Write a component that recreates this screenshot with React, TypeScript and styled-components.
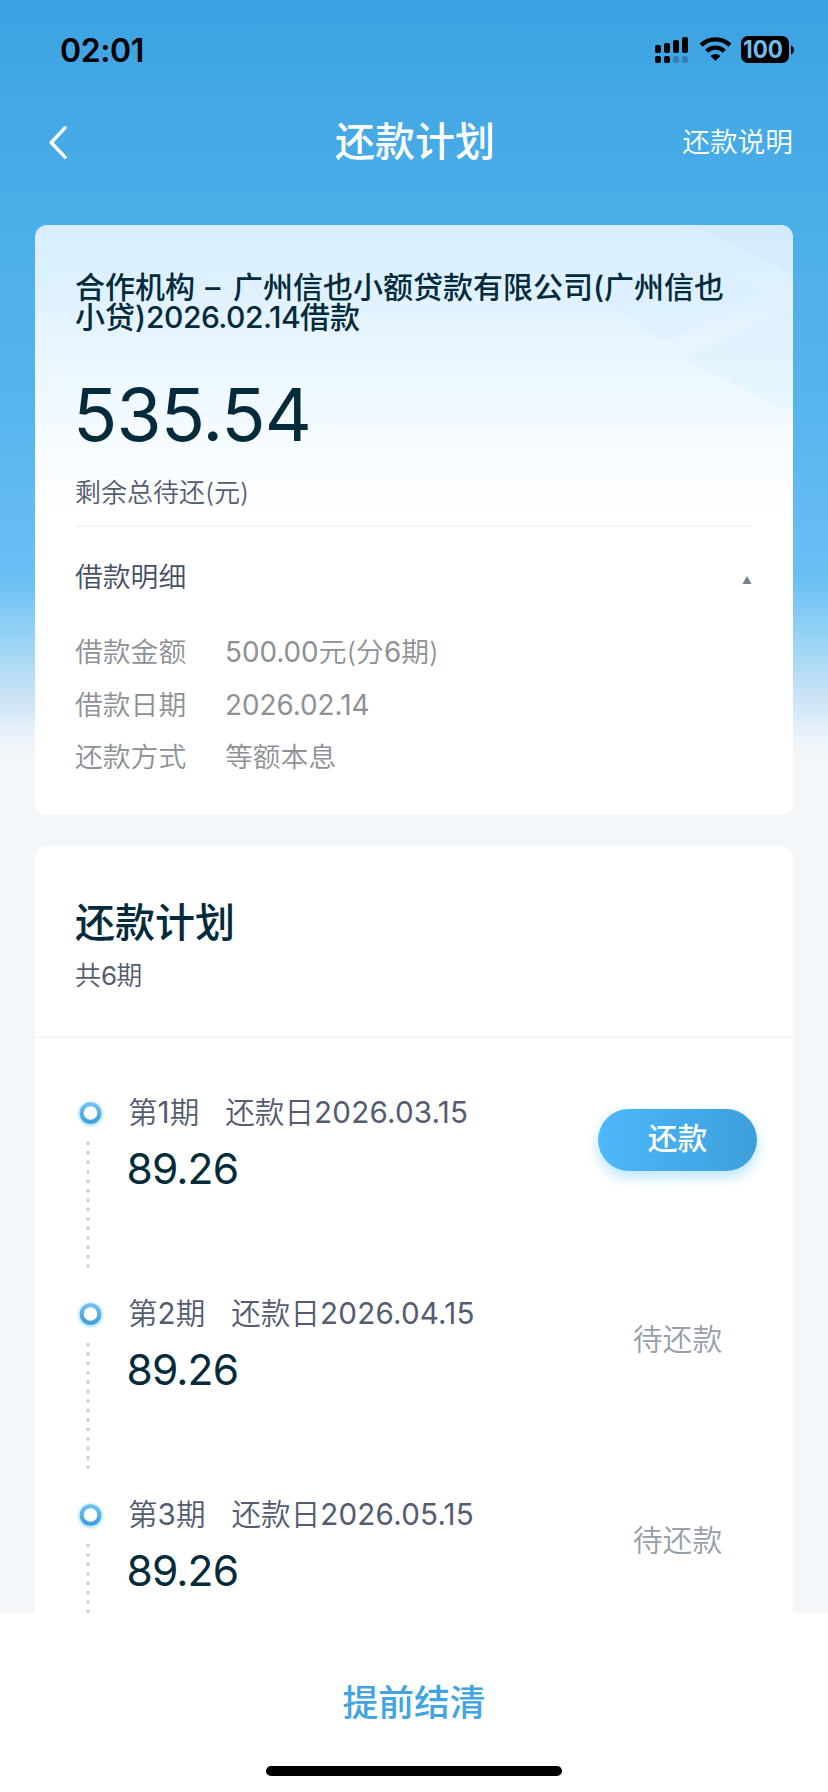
import React from 'react';
import styled, { createGlobalStyle } from 'styled-components';

const GlobalStyle = createGlobalStyle`
  * { box-sizing: border-box; }
  body {
    margin: 0;
    font-family: Inter, "Noto Sans CJK SC", sans-serif;
    background: #f4f7fa;
  }
`;

const Screen = styled.main`
  display: flex;
  flex-direction: column;
  width: 828px;
  height: 1792px;
  overflow: hidden;
  background: linear-gradient(
      180deg,
      #3ca2e1 0,
      #4baee9 220px,
      #57b4ed 400px,
      #66bcf3 530px,
      #68bff4 576px,
      #9ad3f5 640px,
      #cbe3f6 698px,
      #ecf3f9 738px,
      #f4f7fa 760px
    )
    #f4f7fa;
`;

const StatusBar = styled.div`
  display: flex;
  align-items: center;
  justify-content: space-between;
  height: 98px;
  padding: 2px 34px 0 60px;
`;

const Clock = styled.time`
  padding-top: 1px;
  font-size: 32px;
  font-weight: 600;
  line-height: 1;
  letter-spacing: -0.4px;
  color: #000;
`;

const StatusIcons = styled.svg`
  display: block;
  width: 140px;
  height: 28px;
`;

const NavBar = styled.header`
  display: grid;
  grid-template-columns: 160px 1fr 160px;
  align-items: center;
  height: 127px;
  padding: 0 35px 37px;
  color: #fff;
`;

const BackButton = styled.button`
  display: flex;
  align-items: center;
  padding: 0 0 0 13px;
  border: 0;
  background: none;
  color: inherit;
`;

const PageTitle = styled.h1`
  margin: 0;
  padding: 0 0 2px 2px;
  font-size: 40px;
  font-weight: 500;
  line-height: 1;
  text-align: center;
`;

const NavLink = styled.a`
  font-size: 27.7px;
  font-weight: 350;
  line-height: 1;
  text-align: right;
`;

const Content = styled.section`
  display: flex;
  flex: 1;
  flex-direction: column;
  gap: 31px;
  min-height: 0;
  padding: 0 35px;
  overflow: hidden;
`;

const Card = styled.article`
  flex: none;
  overflow: hidden;
  border-radius: 12px;
  background: #fff;
`;

const SummaryCard = styled(Card)`
  position: relative;
  height: 590px;
  padding: 47px 41px 0 40px;
  background: linear-gradient(180deg, #d8eeff 0, #e3f3ff 90px, #eef8ff 160px, #f8fcff 230px, #fff 300px);
`;

const Watermark = styled.svg`
  position: absolute;
  top: 0;
  right: 0;
  width: 200px;
  height: 190px;
`;

const LoanName = styled.h2`
  position: relative;
  margin: 0;
  font-size: 30px;
  font-weight: 500;
  line-height: 30px;
  white-space: nowrap;
  color: #042b3b;
`;

const Latin = styled.span<{ $spacing?: number; $weight?: number }>`
  font-weight: ${(p) => p.$weight ?? 400};
  letter-spacing: ${(p) => p.$spacing ?? 0}px;
`;

const TotalAmount = styled.div`
  margin: 38px 0 0 -2px;
  font-size: 73px;
  line-height: 90px;
  letter-spacing: -0.9px;
  color: #042b3b;
`;

const Caption = styled.div<{ $top: number }>`
  margin-top: ${(p) => p.$top}px;
  font-size: 26px;
  font-weight: 350;
  line-height: 36px;
  color: #535c70;
`;

const DetailHeader = styled.div`
  display: flex;
  align-items: center;
  justify-content: space-between;
  margin-top: 14px;
  padding-top: 30px;
  border-top: 2px solid #f4f5f6;
  font-size: 27.8px;
  font-weight: 350;
  line-height: 40px;
  color: #454f65;
`;

const ExpandMark = styled.svg`
  width: 10px;
  height: 10px;
  margin-top: 5px;
`;

const DetailList = styled.dl`
  display: grid;
  grid-template-columns: 150px 1fr;
  grid-auto-rows: 52.5px;
  align-items: center;
  margin: 29px 0 0;
  font-size: 27.8px;
  font-weight: 350;
  line-height: 40px;
  color: #8d9196;
`;

const Detail = styled.dd`
  margin: 0;
`;

const PlanHeader = styled.div`
  height: 192px;
  padding: 53px 40px 0;
  border-bottom: 2px solid #f4f6f7;
`;

const PlanTitle = styled.h2`
  margin: 0;
  font-size: 40px;
  font-weight: 500;
  line-height: 48px;
  color: #042b3b;
`;

const Installment = styled.div`
  display: grid;
  grid-template-columns: 53px 1fr 159px;
  height: 201px;
  padding: 0 36px 0 40px;
`;

const InstallmentList = styled.div`
  padding-top: 48px;
`;

const Track = styled.svg`
  display: block;
  width: 32px;
  height: 201px;
`;

const Period = styled.div`
  display: flex;
  gap: 26px;
  padding-top: 4px;
  font-size: 29.6px;
  font-weight: 350;
  line-height: 44px;
  white-space: nowrap;
  color: #535c70;
`;

const Amount = styled.div`
  margin: 7px 0 0 -1.5px;
  font-size: 42.5px;
  line-height: 56px;
  letter-spacing: -0.9px;
  color: #042b3b;
`;

const Action = styled.div`
  display: flex;
  align-items: center;
  justify-content: center;
  height: 62px;
  margin-top: 23px;
  padding: 0 0 3px;
  font-size: 29.8px;
  line-height: 1;
`;

const PayButton = styled(Action).attrs({ as: 'button' })`
  border: 0;
  border-radius: 31px;
  background: linear-gradient(90deg, #4db8fa, #3d9fdc);
  box-shadow: 0 6px 14px rgba(77, 190, 255, 0.4);
  font-family: inherit;
  font-weight: 500;
  color: #fff;
`;

const Pending = styled(Action)`
  font-weight: 350;
  color: #979fa8;
`;

const Footer = styled.footer`
  display: flex;
  flex: none;
  flex-direction: column;
  align-items: center;
  height: 179px;
  padding-top: 70px;
  background: #fff;
`;

const SettleButton = styled.button`
  padding: 0;
  border: 0;
  background: none;
  font-family: inherit;
  font-size: 35.8px;
  font-weight: 500;
  line-height: 40px;
  color: #42a5e1;
`;

const HomeIndicator = styled.div`
  width: 296px;
  height: 10px;
  margin-top: 43px;
  border-radius: 5px;
  background: #000;
`;

const installments = [
  { no: '1', date: '2026.03.15', amount: '89.26', due: true },
  { no: '2', date: '2026.04.15', amount: '89.26', due: false },
  { no: '3', date: '2026.05.15', amount: '89.26', due: false },
];

const DOTS = Array.from({ length: 14 }, (_, i) => 57.5 + i * 9.43);

function TimelineTrack({ id }: { id: string }) {
  return (
    <Track viewBox="0 0 32 201">
      <defs>
        <linearGradient id={id} x1="0" y1="0" x2="0" y2="1">
          <stop offset="0" stopColor="#72c0f0" />
          <stop offset="1" stopColor="#3f9fdd" />
        </linearGradient>
        <filter id={`${id}-glow`} x="-50%" y="-50%" width="200%" height="200%">
          <feGaussianBlur stdDeviation="1.8" />
        </filter>
      </defs>
      <circle cx="15.5" cy="28" r="9.5" fill="none" stroke="#a5e2ff" strokeWidth="5" filter={`url(#${id}-glow)`} />
      <circle cx="15.5" cy="27" r="8.8" fill="#fff" stroke={`url(#${id})`} strokeWidth="4" />
      {DOTS.map((y) => (
        <ellipse key={y} cx="13" cy={y} rx="1.5" ry="1.9" fill="#b9cfd9" />
      ))}
    </Track>
  );
}

export default function App() {
  return (
    <>
      <GlobalStyle />
      <Screen>
        <StatusBar>
          <Clock>02:01</Clock>
          <StatusIcons viewBox="0 0 140 28">
            <rect x="1" y="9" width="6" height="8" rx="2" />
            <rect x="10" y="7" width="6" height="10" rx="2" />
            <rect x="19" y="4" width="6" height="13" rx="2" />
            <rect x="28" y="1" width="6" height="16" rx="2" />
            <rect x="1" y="20" width="6" height="7" rx="2" />
            <rect x="10" y="20" width="6" height="7" rx="2" />
            <rect x="19" y="20" width="6" height="7" rx="2" opacity="0.22" />
            <rect x="28" y="20" width="6" height="7" rx="2" opacity="0.22" />
            <path d="M47.1 9.2a20.8 20.8 0 0 1 28.8 0" fill="none" stroke="#000" strokeWidth="4.4" />
            <path d="M52.7 15.2a12.6 12.6 0 0 1 17.6 0" fill="none" stroke="#000" strokeWidth="4.2" />
            <path d="M61.5 25l-5-5.1a7.2 7.2 0 0 1 10 0z" />
            <rect x="87" y="0" width="48" height="27" rx="7" />
            <path d="M137 9.5c4 1.5 4 7.5 0 9z" />
            <text
              x="89"
              y="22"
              fontSize="24"
              fontWeight="700"
              textLength="40"
              lengthAdjust="spacingAndGlyphs"
              fill="#6fbcea"
            >
              100
            </text>
          </StatusIcons>
        </StatusBar>
        <NavBar>
          <BackButton aria-label="返回">
            <svg
              width="20"
              height="34"
              viewBox="0 0 20 34"
              fill="none"
              stroke="#fff"
              strokeWidth="3.4"
              strokeLinecap="round"
              strokeLinejoin="round"
            >
              <path d="M17 1.8L3.2 16.5L17 31.2" />
            </svg>
          </BackButton>
          <PageTitle>还款计划</PageTitle>
          <NavLink>还款说明</NavLink>
        </NavBar>
        <Content>
          <SummaryCard>
            <Watermark viewBox="0 0 200 190">
              <path d="M100 0L200 50V0z" fill="#c8e4fa" opacity="0.3" />
              <path d="M10 75L80 25L176 67L73 117z" fill="#d2ebff" opacity="0.25" />
              <path d="M89 133L200 83V182L190 184z" fill="#d6f0fc" opacity="0.4" />
            </Watermark>
            <LoanName>
              合作机构<Latin $spacing={2.3} $weight={500}> – </Latin>广州信也小额贷款有限公司(广州信也
              <br />
              小贷)<Latin $spacing={-0.5} $weight={500}>2026.02.14</Latin>借款
            </LoanName>
            <TotalAmount>535.54</TotalAmount>
            <Caption $top={15}>剩余总待还(元)</Caption>
            <DetailHeader>
              借款明细
              <ExpandMark viewBox="0 0 10 10">
                <path d="M5 1L9.5 9H0.5z" fill="#6f8193" />
              </ExpandMark>
            </DetailHeader>
            <DetailList>
              <dt>借款金额</dt>
              <Detail>
                <Latin>500.00</Latin>元(分<Latin>6</Latin>期)
              </Detail>
              <dt>借款日期</dt>
              <Detail>
                <Latin>2026.02.14</Latin>
              </Detail>
              <dt>还款方式</dt>
              <Detail>等额本息</Detail>
            </DetailList>
          </SummaryCard>
          <Card>
            <PlanHeader>
              <PlanTitle>还款计划</PlanTitle>
              <Caption $top={11}>
                共<Latin $spacing={-1}>6</Latin>期
              </Caption>
            </PlanHeader>
            <InstallmentList>
              {installments.map((item) => (
                <Installment key={item.no}>
                  <TimelineTrack id={`ring${item.no}`} />
                  <div>
                    <Period>
                      <span>
                        第<Latin>{item.no}</Latin>期
                      </span>
                      <span>
                        还款日<Latin $spacing={0.2}>{item.date}</Latin>
                      </span>
                    </Period>
                    <Amount>{item.amount}</Amount>
                  </div>
                  {item.due ? <PayButton>还款</PayButton> : <Pending>待还款</Pending>}
                </Installment>
              ))}
            </InstallmentList>
          </Card>
        </Content>
        <Footer>
          <SettleButton>提前结清</SettleButton>
          <HomeIndicator />
        </Footer>
      </Screen>
    </>
  );
}
